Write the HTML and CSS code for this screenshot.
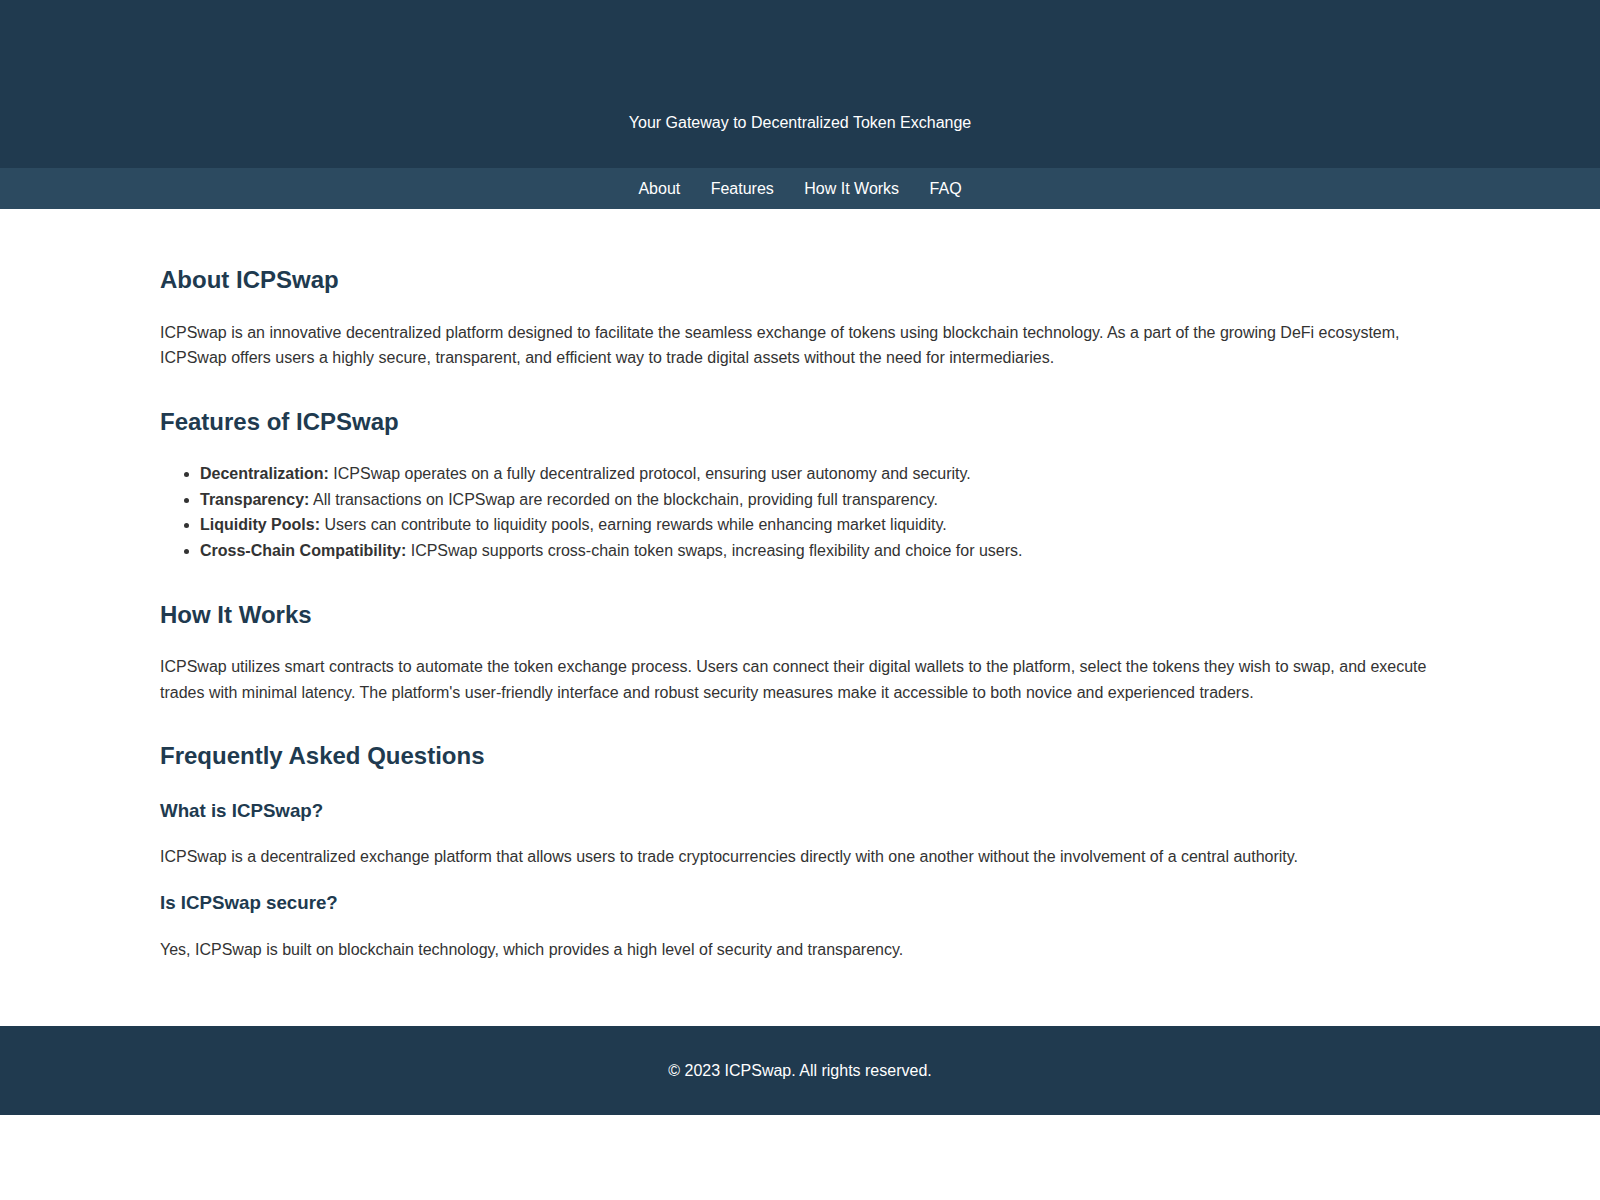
FILE: index.html
```html
<!DOCTYPE html>
<html lang="en">
<head>
  <meta charset="utf-8">
  <title>ICPSwap - Decentralized Token Exchange</title>
  <link rel="stylesheet" href="styles.css">
</head>
<body>

<header class="site-header">
  <div class="logo"></div>
  <p class="tagline">Your Gateway to Decentralized Token Exchange</p>
</header>

<nav class="site-nav">
  <a href="#about">About</a>
  <a href="#features">Features</a>
  <a href="#how-it-works">How It Works</a>
  <a href="#faq">FAQ</a>
</nav>

<main class="content">

  <section id="about" class="section">
    <h2>About ICPSwap</h2>
    <p>ICPSwap is an innovative decentralized platform designed to facilitate the seamless exchange of tokens using blockchain technology. As a part of the growing DeFi ecosystem, ICPSwap offers users a highly secure, transparent, and efficient way to trade digital assets without the need for intermediaries.</p>
  </section>

  <section id="features" class="section">
    <h2>Features of ICPSwap</h2>
    <ul>
      <li><strong>Decentralization:</strong> ICPSwap operates on a fully decentralized protocol, ensuring user autonomy and security.</li>
      <li><strong>Transparency:</strong> All transactions on ICPSwap are recorded on the blockchain, providing full transparency.</li>
      <li><strong>Liquidity Pools:</strong> Users can contribute to liquidity pools, earning rewards while enhancing market liquidity.</li>
      <li><strong>Cross-Chain Compatibility:</strong> ICPSwap supports cross-chain token swaps, increasing flexibility and choice for users.</li>
    </ul>
  </section>

  <section id="how-it-works" class="section">
    <h2>How It Works</h2>
    <p>ICPSwap utilizes smart contracts to automate the token exchange process. Users can connect their digital wallets to the platform, select the tokens they wish to swap, and execute trades with minimal latency. The platform's user-friendly interface and robust security measures make it accessible to both novice and experienced traders.</p>
  </section>

  <section id="faq" class="section">
    <h2>Frequently Asked Questions</h2>
    <h3>What is ICPSwap?</h3>
    <p>ICPSwap is a decentralized exchange platform that allows users to trade cryptocurrencies directly with one another without the involvement of a central authority.</p>
    <h3>Is ICPSwap secure?</h3>
    <p>Yes, ICPSwap is built on blockchain technology, which provides a high level of security and transparency.</p>
  </section>

</main>

<footer class="site-footer">
  <p>&copy; 2023 ICPSwap. All rights reserved.</p>
</footer>

</body>
</html>
```

FILE: styles.css
```css
body {
  margin: 0;
  font-family: "Liberation Sans", Arial, Helvetica, sans-serif;
  font-size: 16px;
  line-height: 1.6;
  color: #333;
  background: #fff;
}

.site-header {
  background: #203a4f;
  color: #fff;
  text-align: center;
  padding: 16px 0;
}
.logo {
  height: 94px;
}
.tagline {
  margin: 0 0 16px;
}

.site-nav {
  background: #2c4a60;
  text-align: center;
  padding: 8px 0;
}
.site-nav a {
  color: #fff;
  text-decoration: none;
  margin: 0 13px;
}

.content {
  width: 80%;
  margin: 0 auto;
  padding: 32px 0 31px;
}
.section {
  margin-bottom: 32px;
}
.content h2,
.content h3 {
  color: #203a4f;
}
.content h2 {
  font-size: 24px;
  margin: 20px 0;
}
.content h3 {
  font-size: 18.72px;
  margin: 18.72px 0;
}
.content p,
.content ul {
  margin: 16px 0;
}

.site-footer {
  background: #203a4f;
  color: #fff;
  text-align: center;
  padding: 16px 0;
}
```
